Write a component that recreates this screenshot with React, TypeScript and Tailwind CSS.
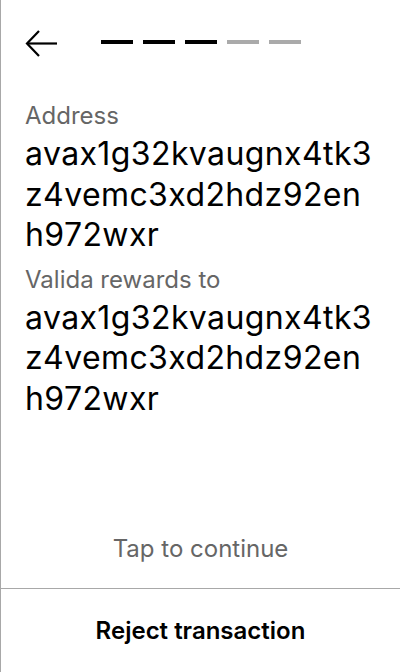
import React from "react";

const lines = ["avax1g32kvaugnx4tk3", "z4vemc3xd2hdz92en", "h972wxr"];

function Field({ label, value }: { label: string; value: string[] }) {
  return (
    <div className="flex flex-col">
      <div className="text-[24px] leading-[32px] text-[#666666]">{label}</div>
      <div className="mt-[2px] text-[32px] leading-[40.5px] tracking-[0.4px] text-black">
        {value.map((l, i) => (
          <div key={i}>{l}</div>
        ))}
      </div>
    </div>
  );
}

export default function App() {
  const steps = [true, true, true, false, false];
  return (
    <div className="w-[400px] h-[672px] bg-white border-l border-[#a8a8a8] flex flex-col font-['Inter',sans-serif]">
      <div className="flex items-center pl-6 pt-[29px]">
        <svg width="32" height="28" viewBox="0 0 32 28" fill="none">
          <path d="M32 14.5H2" stroke="black" strokeWidth="2.2" />
          <path d="M14 2L2 14.5L14 27" stroke="black" strokeWidth="2.2" />
        </svg>
        <div className="ml-[44px] mb-[2px] flex gap-[10px]">
          {steps.map((on, i) => (
            <div key={i} className={on ? "w-[32px] h-[4px] bg-black" : "w-[32px] h-[4px] bg-[#aaaaaa]"} />
          ))}
        </div>
      </div>
      <div className="mt-[43px] pl-6 pr-6 flex flex-col gap-[8px]">
        <Field label="Address" value={lines} />
        <Field label="Valida rewards to" value={lines} />
      </div>
      <div className="flex-1" />
      <div className="pb-[23px] text-center text-[24px] leading-[32px] text-[#666666]">Tap to continue</div>
      <div className="h-[84px] pt-[1px] border-t border-[#a8a8a8] flex items-center justify-center">
        <span className="text-[24px] leading-[32px] font-semibold text-black">Reject transaction</span>
      </div>
    </div>
  );
}
